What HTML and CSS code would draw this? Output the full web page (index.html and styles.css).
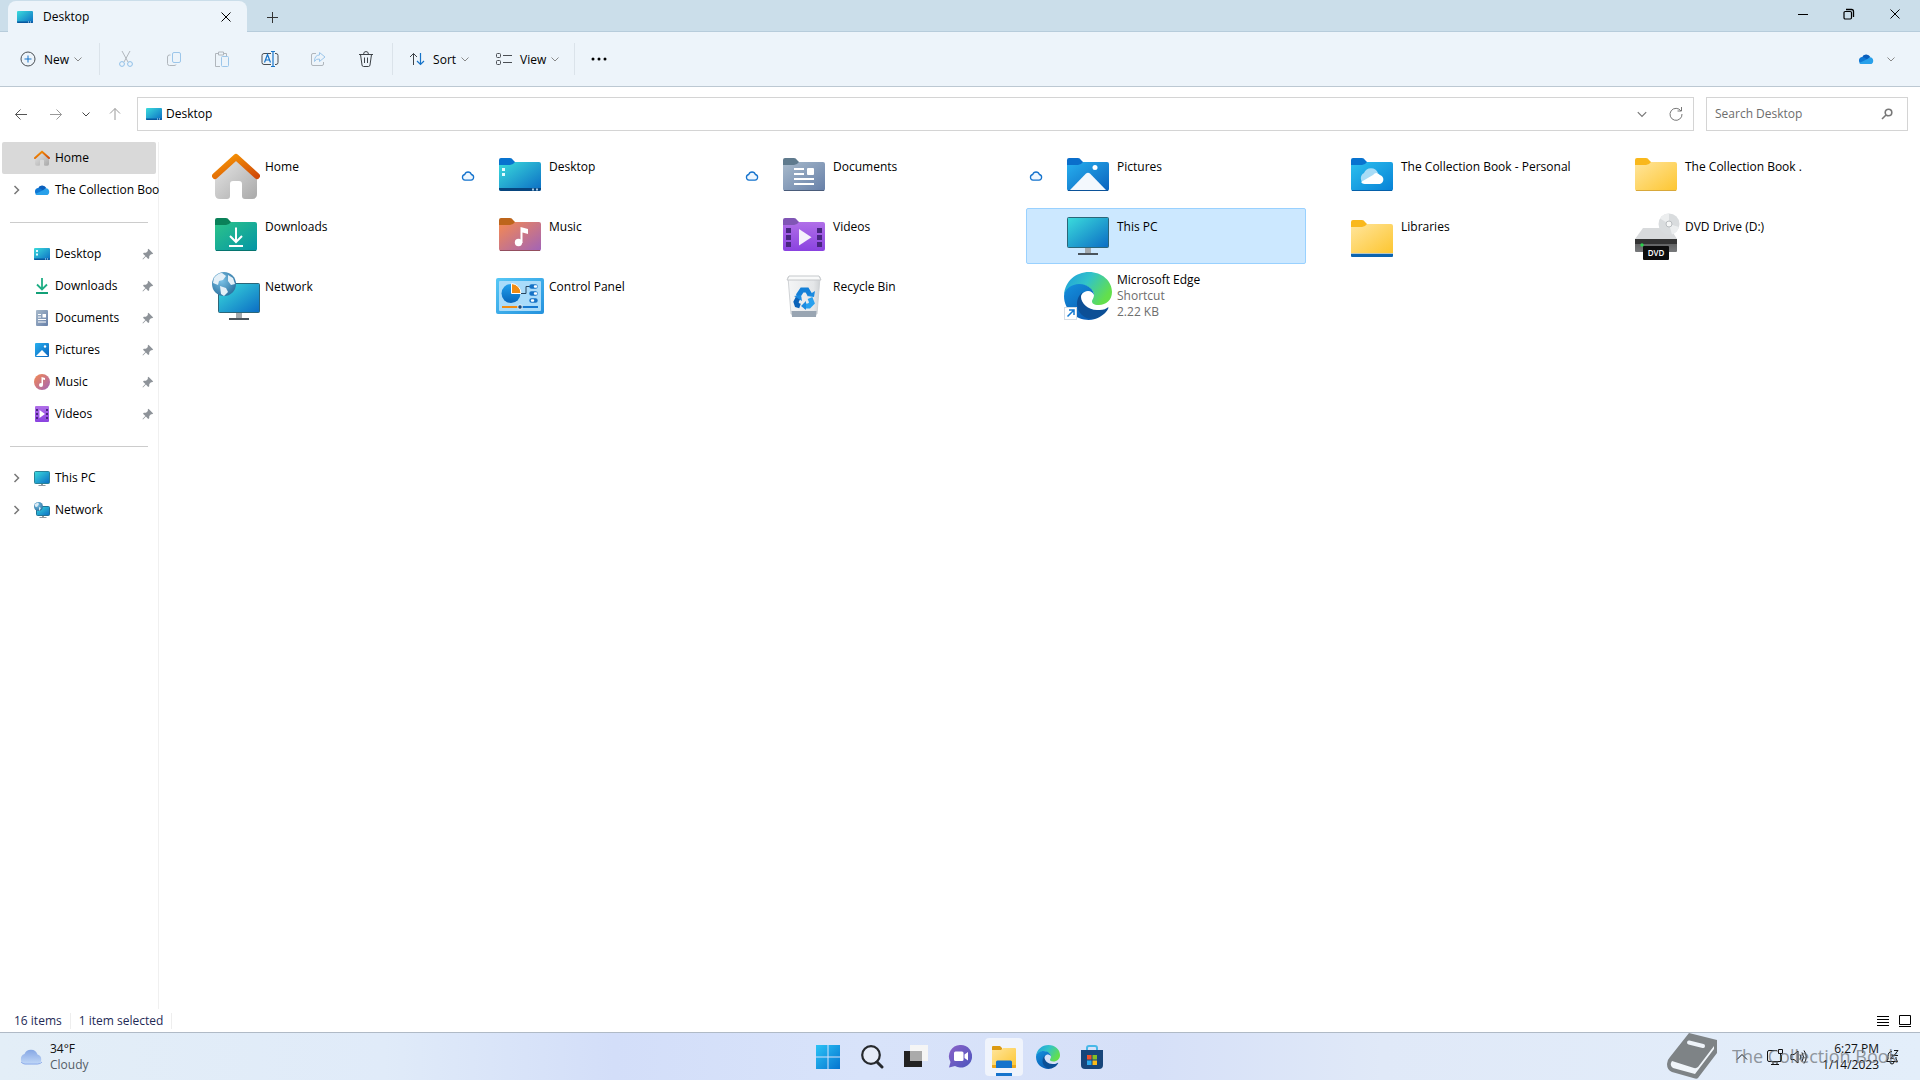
FILE: index.html
```html
<!DOCTYPE html>
<html lang="en">
<head>
<meta charset="utf-8">
<title>Desktop</title>
<link rel="stylesheet" href="styles.css">
</head>
<body>
<svg class="defs" aria-hidden="true">
  <defs>
    <linearGradient id="gTeal" x1="0" y1="0" x2="1" y2="1"><stop offset="0" stop-color="#3bdcdc"/><stop offset="1" stop-color="#0b6cc4"/></linearGradient>
    <linearGradient id="gBlue" x1="0" y1="0" x2="1" y2="1"><stop offset="0" stop-color="#27b0ef"/><stop offset="1" stop-color="#0b62bd"/></linearGradient>
    <linearGradient id="gCloudF" x1="0" y1="0" x2="1" y2="1"><stop offset="0" stop-color="#2cc0ee"/><stop offset="1" stop-color="#0781d6"/></linearGradient>
    <linearGradient id="gGreen" x1="0" y1="0" x2="1" y2="1"><stop offset="0" stop-color="#2dc489"/><stop offset="1" stop-color="#0394a6"/></linearGradient>
    <linearGradient id="gMusic" x1="0" y1="0" x2="1" y2="1"><stop offset="0" stop-color="#f58a51"/><stop offset="1" stop-color="#a163b8"/></linearGradient>
    <linearGradient id="gDoc" x1="0" y1="0" x2="1" y2="1"><stop offset="0" stop-color="#a8bacb"/><stop offset="1" stop-color="#667fa8"/></linearGradient>
    <linearGradient id="gVid" x1="0" y1="0" x2="0" y2="1"><stop offset="0" stop-color="#b06fe8"/><stop offset="1" stop-color="#8a42e0"/></linearGradient>
    <linearGradient id="gYel" x1="0" y1="0" x2="1" y2="1"><stop offset="0" stop-color="#ffe59c"/><stop offset="1" stop-color="#fdc630"/></linearGradient>
    <linearGradient id="gRoof" x1="0" y1="0" x2="1" y2="1"><stop offset="0" stop-color="#fa9c05"/><stop offset="1" stop-color="#d04a08"/></linearGradient>
    <linearGradient id="gWall" x1="0" y1="0" x2="1" y2="1"><stop offset="0" stop-color="#e6e6e6"/><stop offset="1" stop-color="#a9a9a9"/></linearGradient>
    <linearGradient id="gPanel" x1="0" y1="0" x2="1" y2="1"><stop offset="0" stop-color="#56c8f6"/><stop offset="1" stop-color="#2491dd"/></linearGradient>
    <linearGradient id="gPie" x1="0" y1="0" x2="0" y2="1"><stop offset="0" stop-color="#22a0ec"/><stop offset="1" stop-color="#0666bb"/></linearGradient>
    <radialGradient id="gGlobe" cx=".4" cy=".35" r=".7"><stop offset="0" stop-color="#7cc3e8"/><stop offset="1" stop-color="#2a6f9d"/></radialGradient>
    <linearGradient id="gEdgeTop" x1="0" y1="0" x2="1" y2=".5"><stop offset="0" stop-color="#1c9ce0"/><stop offset=".5" stop-color="#32c3c8"/><stop offset="1" stop-color="#63df4c"/></linearGradient>
    <linearGradient id="gEdgeMid" x1="0" y1="0" x2=".6" y2="1"><stop offset="0" stop-color="#1591dd"/><stop offset="1" stop-color="#0a5db5"/></linearGradient>
    <linearGradient id="gChat" x1="0" y1="0" x2="1" y2="1"><stop offset="0" stop-color="#8b62c8"/><stop offset="1" stop-color="#4b55bd"/></linearGradient>
    <linearGradient id="gWin" gradientUnits="userSpaceOnUse" x1="0" y1="0" x2="24" y2="24"><stop offset="0" stop-color="#2cc3f6"/><stop offset="1" stop-color="#0574cf"/></linearGradient>
    <linearGradient id="gDrive" x1="0" y1="0" x2="0" y2="1"><stop offset="0" stop-color="#555"/><stop offset="1" stop-color="#77797b"/></linearGradient>
    <linearGradient id="gBin" x1="0" y1="0" x2="1" y2="0"><stop offset="0" stop-color="#f4f5f6"/><stop offset=".8" stop-color="#e4e6e8"/><stop offset="1" stop-color="#cfd2d5"/></linearGradient>
    <linearGradient id="gWeather" x1="0" y1="0" x2="0" y2="1"><stop offset="0" stop-color="#86a7e4"/><stop offset="1" stop-color="#c2d9f8"/></linearGradient>

    <symbol id="chev" viewBox="0 0 10 10"><path d="M1.500 3.500 5 7l3.500-3.500" fill="none" stroke="currentColor"/></symbol>
    <symbol id="chevRight" viewBox="0 0 10 10"><path d="M3.500 1 7.500 5l-4 4" fill="none" stroke="currentColor" stroke-width="1.500"/></symbol>
    <symbol id="cross" viewBox="0 0 12 12"><path d="m1.500 1.500 9 9m0-9-9 9" fill="none" stroke="currentColor"/></symbol>
    <symbol id="pin" viewBox="0 0 12 12"><path d="M6.500.8 11.200 5.500 10 6.300 9 6.200 7.300 8.100 7.200 10.300 6.200 11 3.900 8.600 1 11.500.5 11 3.400 8.100 1 5.700 1.800 4.700 4 4.700 5.900 3 5.700 1.800Z" fill="#8e9399"/></symbol>
    <symbol id="onedrive" viewBox="0 0 16 12"><path d="M4 4.500A4.500 4.500 0 0 1 12.300 4L9 8 3 7Z" fill="#0a5fbd"/><path d="M3.800 4.100C5 4 6 4.300 7 5l7 5.500-10 .5A3.500 3.500 0 0 1 3.800 4.100Z" fill="#0f78d4"/><path d="M9 6.300 12 4.200a3.500 3.500 0 0 1 .5 6.900H3.800c-1 0-1.900-.5-2.600-1.200Z" fill="#28a0ea"/></symbol>
    <symbol id="cloud" viewBox="0 0 14 12"><path d="M4 10.200a2.900 2.900 0 0 1-.3-5.700 3.500 3.500 0 0 1 6.700 0 2.900 2.900 0 0 1-.4 5.700Z" fill="#eef7ff" stroke="#1573cd" stroke-width="1.300"/></symbol>

    <symbol id="desk" viewBox="0 0 16 12"><rect width="16" height="12" rx="1" fill="url(#gTeal)"/><path d="M0 10.500h16v.5a1 1 0 0 1-1 1H1a1 1 0 0 1-1-1Z" fill="#07579e"/><path d="M11 11h1m1 0h1" stroke="#cfe9fa"/></symbol>
    <symbol id="deskDots" viewBox="0 0 16 12"><use href="#desk"/><path d="M2 2h2v2H2zm0 3.500h2v2H2z" fill="#e3fbff"/></symbol>

    <symbol id="home" viewBox="0 0 48 48"><path d="M24 8 45 27v15q0 5-5 5h-7q-3 0-3-3V32q0-3-3-3h-6q-3 0-3 3v12q0 3-3 3H8q-5 0-5-5V27Z" fill="url(#gWall)"/><path d="M3 24 24 5l21 19" fill="none" stroke="url(#gRoof)" stroke-width="6" stroke-linecap="round" stroke-linejoin="round"/></symbol>

    <symbol id="fDesktop" viewBox="0 0 48 48"><path d="M3 8q0-2 2-2h9q2 0 3 2l2 2v6H3Z" fill="#0873cf"/><path d="M3 13h11q3 0 5-3h24q2 0 2 2v25q0 2-2 2H5q-2 0-2-2Z" fill="url(#gTeal)"/><path d="M3 36h42v1q0 2-2 2H5q-2 0-2-2Z" fill="#07457e"/><path d="M6 16h3v3H6zm0 5h3v3H6z" fill="#e3fbff"/><path d="M36 37.500h2m2 0h2" stroke="#a7cce8" stroke-width="2"/></symbol>
    <symbol id="fDocs" viewBox="0 0 48 48"><path d="M3 8q0-2 2-2h9q2 0 3 2l2 2v6H3Z" fill="#5f7a8d"/><path d="M3 13h11q3 0 5-3h24q2 0 2 2v25q0 2-2 2H5q-2 0-2-2Z" fill="url(#gDoc)"/><path d="M4 38.500h40" stroke="#4a5c7a"/><path d="M14 17h10m-10 5h10m-10 5h20m-20 5h20" stroke="#fff" stroke-width="2"/><rect x="27" y="16" width="7" height="7" rx="1" fill="#fff"/></symbol>
    <symbol id="fPics" viewBox="0 0 48 48"><path d="M3 8q0-2 2-2h9q2 0 3 2l2 2v6H3Z" fill="#0a6ecb"/><path d="M3 13h11q3 0 5-3h24q2 0 2 2v25q0 2-2 2H5q-2 0-2-2Z" fill="url(#gBlue)"/><path d="M6 38 22 21.500q2-1.500 4 0L42 38Z" fill="#f3f8fd"/><circle cx="31" cy="15.500" r="2.500" fill="#fff"/><path d="M4 38.500h40" stroke="#0b5299"/></symbol>
    <symbol id="fCloud" viewBox="0 0 48 48"><path d="M3 8q0-2 2-2h9q2 0 3 2l2 2v6H3Z" fill="#0873cf"/><path d="M3 13h11q3 0 5-3h24q2 0 2 2v25q0 2-2 2H5q-2 0-2-2Z" fill="url(#gCloudF)"/><path d="M4 38.500h40" stroke="#0460aa"/><path d="M17 32a6 6 0 0 1-1-11 7.500 7.500 0 0 1 14 0Z" fill="#a8dcf6"/><path d="M17 32q-3 0-4-2l12-7q3-4 7 0a4.700 4.700 0 0 1 0 9Z" fill="#fff"/></symbol>
    <symbol id="fYellow" viewBox="0 0 48 48"><path d="M3 8q0-2 2-2h9q2 0 3 2l2 2v6H3Z" fill="#f9b81c"/><path d="M3 13h11q3 0 5-3h24q2 0 2 2v25q0 2-2 2H5q-2 0-2-2Z" fill="url(#gYel)"/><path d="M4 38.500h40" stroke="#d8a83a"/></symbol>
    <symbol id="fLib" viewBox="0 0 48 48"><path d="M3 10q0-2 2-2h9q2 0 3 2l2 2v6H3Z" fill="#f9b81c"/><path d="M3 15h11q3 0 5-3h24q2 0 2 2v27H3Z" fill="url(#gYel)"/><path d="M3 41h42v1H3z" fill="#b9c8c0"/><path d="M3 42h42v2q0 1-1 1H4q-1 0-1-1Z" fill="#0c64b0"/></symbol>
    <symbol id="fDown" viewBox="0 0 48 48"><path d="M3 8q0-2 2-2h9q2 0 3 2l2 2v6H3Z" fill="#0a8159"/><path d="M3 13h11q3 0 5-3h24q2 0 2 2v25q0 2-2 2H5q-2 0-2-2Z" fill="url(#gGreen)"/><path d="M4 38.500h40" stroke="#06756f"/><path d="M24 15.500V29m-6-5 6 6 6-6M17 34h14" fill="none" stroke="#fff" stroke-width="2"/></symbol>
    <symbol id="fMusic" viewBox="0 0 48 48"><path d="M3 8q0-2 2-2h9q2 0 3 2l2 2v6H3Z" fill="#bd651b"/><path d="M3 13h11q3 0 5-3h24q2 0 2 2v25q0 2-2 2H5q-2 0-2-2Z" fill="url(#gMusic)"/><path d="M4 38.500h40" stroke="#934e5e"/><circle cx="22.500" cy="30.500" r="3.700" fill="#fff"/><path d="M24.500 31V15l7.500 2v5l-5.500-1.500V31Z" fill="#fff"/></symbol>
    <symbol id="fVid" viewBox="0 0 48 48"><path d="M3 8q0-2 2-2h9q2 0 3 2l2 2v6H3Z" fill="#8055b5"/><path d="M3 13h11q3 0 5-3h24q2 0 2 2v25q0 2-2 2H5q-2 0-2-2Z" fill="url(#gVid)"/><path d="M6 16h5v5H6zm0 7h5v5H6zm0 7h5v5H6zM37 16h5v5h-5zm0 7h5v5h-5zm0 7h5v5h-5z" fill="#482680"/><path d="M19 17v16.500l12.500-8.300Z" fill="#f6f0fc"/></symbol>

    <symbol id="pc" viewBox="0 0 48 48"><path d="M21 35h6v7h-6z" fill="#a4aaae"/><path d="M14 41h20v2H14z" fill="#4a545c"/><rect x="3.500" y="5.500" width="41" height="30" rx="1" fill="url(#gTeal)" stroke="#2b6679"/></symbol>
    <symbol id="net" viewBox="0 0 48 48"><path d="M24 40h6v7h-6z" fill="#a4aaae"/><path d="M17 46h20v2H17z" fill="#4a545c"/><rect x="6.500" y="11.500" width="41" height="29" rx="1" fill="url(#gTeal)" stroke="#2b6679"/><circle cx="12" cy="12" r="12" fill="url(#gGlobe)"/><path d="M2 6q4-5 8-5l4 3-3 4-4 1-1 4-5-2ZM16 3l5 3 2 6-4 1-3-4ZM8 14l6 2 2 4-4 4-3-2Z" fill="#e4f0f8"/></symbol>
    <symbol id="cpl" viewBox="0 0 48 48"><rect y="6" width="48" height="36" rx="2" fill="url(#gPanel)"/><rect x="3" y="9" width="42" height="30" rx="1" fill="#a9dcfa"/><circle cx="15" cy="21.500" r="9.500" fill="url(#gPie)"/><path d="M15.500 21.500v-10a10 10 0 0 1 9.500 10Z" fill="#f18c12" stroke="#fff"/><path d="M25 21.500h5v-7h4" fill="none" stroke="#27455e"/><path d="M35.500 14.500h4m-4 7h4m-4 7h4" stroke="#1573c6" stroke-width="4.500" stroke-linecap="round"/><path d="M39 14.500h1m-1 7h1m-4 7h1" stroke="#fff" stroke-width="2.500" stroke-linecap="round"/><path d="M6 35h16" stroke="#f18c12" stroke-width="2"/><path d="M26 35h16" stroke="#1478d0" stroke-width="2"/><circle cx="24" cy="35" r="2.300" fill="#1d4d7c" stroke="#e8f6ff"/></symbol>
    <symbol id="bin" viewBox="0 0 48 48"><path d="m8 5 3 37h26l3-37Z" fill="url(#gBin)" stroke="#d0d3d6"/><path d="M9 4h30l2 4H7Z" fill="#f9fafa" stroke="#c5c8cb"/><path d="M11.500 39h25l-.5 6H12Z" fill="#99a5b2"/><g fill="none" stroke-width="5"><path d="m18 24 4-6h5l3 5" stroke="#1480d8"/><path d="m30 26 2 5-3 3h-5" stroke="#27a0ee"/><path d="m20 34-3-1-1-3 3-6" stroke="#0b62b8"/></g><path d="m27 24 7 1 1-6ZM26 29v9l-5-4ZM14 24l7-1 1 6Z" fill="#1c8be0"/></symbol>
    <symbol id="edge" viewBox="0 0 48 48"><path d="M0 23C1 9 12 0 25 0c13 0 23 9 23 20 0 8-6 13-13 13-6 0-7-2-7-4 0-1 2-3 2-6 0-5-6-10-14-10C8 13 2 17 0 23Z" fill="url(#gEdgeTop)"/><path d="M0 24C0 17 8 12 15 12c9 0 15 6 15 11-1-2-3-4-6-4-5 0-9 5-9 11 0 9 7 16 16 17C17 51 0 41 0 24Z" fill="url(#gEdgeMid)"/><path d="M19 20c-3 2-6 6-6 12 0 9 8 16 18 15 6-2 11-6 13-10 1-2 0-2-1-1-3 2-6 2-10 2-9 0-16-7-16-13 0-2 1-4 2-5Z" fill="#0c4f96"/></symbol>
    <symbol id="dvd" viewBox="0 0 48 48"><path d="M11 16h27l7 11H3Z" fill="#d8dadc"/><path d="M3 27h42v12q0 1-1 1H4q-1 0-1-1Z" fill="url(#gDrive)"/><path d="M3 27h42v5H3z" fill="#333"/><circle cx="37" cy="12" r="10.500" fill="#d9dcde"/><path d="m37 12-9-5.500A10.500 10.500 0 0 1 37 1.500ZM37 12l10 3q-2 6-7 7.500Z" fill="#eceeef"/><circle cx="37" cy="12" r="3" fill="#f6f7f7" stroke="#b9bdc0"/><circle cx="10" cy="33" r="1.700" fill="#29d34b"/><rect x="11" y="34" width="26" height="14" rx="1" fill="#0d0d0d"/><text x="24" y="44" text-anchor="middle" class="dvd-text">DVD</text></symbol>

    <symbol id="sDown" viewBox="0 0 16 16"><path d="M8 0v11M3 6.500l5 5 5-5" fill="none" stroke="#1fae85" stroke-width="1.800"/><path d="M2 15h12" stroke="#12a077" stroke-width="2"/></symbol>
    <symbol id="sDocs" viewBox="0 0 16 16"><rect x="2" width="12" height="16" rx="1" fill="url(#gDoc)"/><path d="M4 4.500h3M4 7h3m-3 2.500h8M4 12h8" stroke="#fff"/><path d="M8.500 4H12v3.500H8.500z" fill="#fff"/></symbol>
    <symbol id="sPics" viewBox="0 0 16 16"><rect x="1" y="1" width="14" height="14" rx="1" fill="url(#gBlue)"/><path d="m2 14 6-6 6 6Z" fill="#fff"/><circle cx="11" cy="4.500" r="1.200" fill="#fff"/></symbol>
    <symbol id="sMusic" viewBox="0 0 16 16"><circle cx="8" cy="8" r="8" fill="url(#gMusic)"/><circle cx="7" cy="11" r="2" fill="#fff"/><path d="M7.500 11V3l3.500 1v2L9 5.500V11Z" fill="#fff"/></symbol>
    <symbol id="sVid" viewBox="0 0 16 16"><rect x="1" width="14" height="16" rx="1" fill="url(#gVid)"/><path d="M2 3h2v2H2zm0 4h2v2H2zm0 4h2v2H2zM12 3h2v2h-2zm0 4h2v2h-2zm0 4h2v2h-2z" fill="#482680"/><path d="M5.500 4v8L11 8Z" fill="#fff"/></symbol>
    <symbol id="sPc" viewBox="0 0 16 16"><path d="M7 13h2v2H7zM4.500 15h7v1h-7z" fill="#8f989e"/><rect x=".5" y="1.500" width="15" height="12" rx="1" fill="url(#gTeal)" stroke="#2a8297"/></symbol>
    <symbol id="sNet" viewBox="0 0 16 16"><path d="M8 13h2v2H8zM5.500 15h7v1h-7z" fill="#8f989e"/><rect x="2.500" y="4.500" width="13" height="9" rx="1" fill="url(#gTeal)" stroke="#1f7396"/><circle cx="4.500" cy="4.500" r="4.500" fill="url(#gGlobe)"/><path d="m1 2 3-1.500L5 2 3 5 1 4.500ZM5 5l2 1-2 3Z" fill="#dcebf4"/></symbol>
  </defs>
</svg>

<div class="window">
  <header class="titlebar">
    <div class="tab">
      <svg class="i16x12"><use href="#desk"/></svg>
      <span class="tab-name">Desktop</span>
      <button class="bare" aria-label="Close tab"><svg width="12" height="12"><use href="#cross"/></svg></button>
    </div>
    <button class="bare new-tab" aria-label="New tab"><svg width="12" height="12" viewBox="0 0 12 12"><path d="M6.500 1v11M1 6.500h11" stroke="#333"/></svg></button>
    <div class="captions">
      <button class="bare" aria-label="Minimize"><svg width="12" height="12" viewBox="0 0 12 12"><path d="M1 6.500h10" stroke="#000"/></svg></button>
      <button class="bare" aria-label="Restore"><svg width="12" height="12" viewBox="0 0 12 12"><path d="M3 1.500h5.500q2 0 2 2V9" fill="none" stroke="#000" stroke-width="1.300"/><rect x="1" y="3.500" width="7.500" height="7.500" rx="1.200" fill="none" stroke="#000" stroke-width="1.200"/></svg></button>
      <button class="bare" aria-label="Close"><svg width="12" height="12"><use href="#cross"/></svg></button>
    </div>
  </header>

  <div class="toolbar">
    <button class="tool new"><svg width="16" height="16" viewBox="0 0 16 16" fill="none"><circle cx="8" cy="8" r="7" stroke="#4a4f54"/><path d="M8 4.500v7M4.500 8h7" stroke="#1673c8"/></svg><span>New</span><svg class="chev"><use href="#chev"/></svg></button>
    <span class="vsep"></span>
    <div class="tools">
      <button class="tool off" aria-label="Cut" disabled><svg width="16" height="16" viewBox="0 0 16 16" fill="none"><path d="M4 0 10 11M12 0 6 11" stroke="#b0b6bc"/><circle cx="4" cy="13" r="2.400" stroke="#8fbfe8"/><circle cx="12" cy="13" r="2.400" stroke="#8fbfe8"/></svg></button>
      <button class="tool off" aria-label="Copy" disabled><svg width="16" height="16" viewBox="0 0 16 16" fill="none"><rect x="6.500" y="1.500" width="8" height="10" rx="1.500" stroke="#9cc6ea"/><path d="M4.500 4h-1q-2 0-2 2v6.500q0 2 2 2H8q2 0 2-1" stroke="#b0b6bc"/></svg></button>
      <button class="tool off" aria-label="Paste" disabled><svg width="16" height="16" viewBox="0 0 16 16" fill="none"><path d="M4 2.500H1.500v13H6M10 2.500h2.500V5M4.500 1h5v3h-5z" stroke="#b0b6bc"/><rect x="7.500" y="5.500" width="7" height="10" rx="1" stroke="#9cc6ea"/></svg></button>
      <button class="tool" aria-label="Rename"><svg width="18" height="16" viewBox="0 0 18 16" fill="none"><path d="M10 2.500H3q-2 0-2 2v7q0 2 2 2h7M14 2.500h1q2 0 2 2v7q0 2-2 2h-1" stroke="#4a4f54"/><path d="M12 .5v15M10 .5h4m-4 15h4M3.500 11.500l3-8 3 8m-5-2.500h4" stroke="#1673c8" stroke-width="1.200"/></svg></button>
      <button class="tool off" aria-label="Share" disabled><svg width="16" height="16" viewBox="0 0 16 16" fill="none"><path d="M6 2.500H3q-1.500 0-1.500 1.500v9q0 1.500 1.500 1.500h9q1.500 0 1.500-1.500v-2" stroke="#b0b6bc"/><path d="M9.500 1.500 15 6l-5.500 4.500V8q-3.500-.5-5 2.500Q4.500 4 9.500 4Z" stroke="#9cc6ea"/></svg></button>
      <button class="tool" aria-label="Delete"><svg width="16" height="16" viewBox="0 0 16 16" fill="none"><path d="M1 3.500h14M5.500 3.500q0-3 2.500-3t2.500 3M2.500 3.500 4 14q.2 1.500 1.500 1.500h5q1.300 0 1.500-1.500l1.500-10.500M6.500 6.500v5.500m3-5.500v5.500" stroke="#3d4247"/></svg></button>
    </div>
    <span class="vsep"></span>
    <button class="tool sort"><svg width="16" height="14" viewBox="0 0 16 14" fill="none"><path d="M4.500 13V1.500M1 5l3.500-3.500L8 5" stroke="#3d4247"/><path d="M11.500 1v11.500M8 9l3.500 3.500L15 9" stroke="#1673c8" stroke-width="1.200"/></svg><span>Sort</span><svg class="chev"><use href="#chev"/></svg></button>
    <button class="tool view"><svg width="16" height="14" viewBox="0 0 16 14" fill="none" stroke="#4a4f54"><rect x=".5" y="1.500" width="4" height="4" rx="1"/><rect x=".5" y="8.500" width="4" height="4" rx="1"/><path d="M7 3.500h9M7 10.500h9"/></svg><span>View</span><svg class="chev"><use href="#chev"/></svg></button>
    <span class="vsep"></span>
    <button class="tool more" aria-label="See more"><svg width="18" height="4" viewBox="0 0 18 4"><circle cx="3" cy="2" r="1.500"/><circle cx="9" cy="2" r="1.500"/><circle cx="15" cy="2" r="1.500"/></svg></button>
    <button class="tool account" aria-label="OneDrive"><svg class="i16x12"><use href="#onedrive"/></svg><svg class="chev"><use href="#chev"/></svg></button>
  </div>

  <div class="navbar">
    <nav class="history" aria-label="History">
      <button class="bare" aria-label="Back"><svg width="14" height="12" viewBox="0 0 14 12" fill="none" stroke="#555"><path d="M13 6.500H1.500M6.500 1.500l-5 5 5 5"/></svg></button>
      <button class="bare forward" aria-label="Forward"><svg width="14" height="12" viewBox="0 0 14 12" fill="none" stroke="#999"><path d="M1 6.500h11.500M7.500 1.500l5 5-5 5"/></svg></button>
      <button class="bare recent" aria-label="Recent"><svg width="10" height="10"><use href="#chev"/></svg></button>
      <button class="bare" aria-label="Up"><svg width="12" height="14" viewBox="0 0 12 14" fill="none" stroke="#999"><path d="M6 13V1.500M1 6.500l5-5 5 5"/></svg></button>
    </nav>
    <div class="address">
      <a class="crumb" href="#"><svg class="i16x12"><use href="#desk"/></svg>Desktop</a>
      <button class="bare" aria-label="Previous locations"><svg width="12" height="12"><use href="#chev"/></svg></button>
      <button class="bare" aria-label="Refresh"><svg width="14" height="14" viewBox="0 0 14 14" fill="none" stroke="#777"><path d="M12 4a6 6 0 1 0 1 3M12.500 0v4h-4"/></svg></button>
    </div>
    <div class="search">
      <input type="search" placeholder="Search Desktop" aria-label="Search Desktop">
      <svg width="12" height="12" viewBox="0 0 12 12" fill="none" stroke="#777" stroke-width="1.600"><circle cx="7.500" cy="4.500" r="3.300"/><path d="M5 7 1 11"/></svg>
    </div>
  </div>

  <div class="body">
    <nav class="sidebar" aria-label="Folders">
      <a class="row current" href="#"><span class="exp"></span><svg class="i16"><use href="#home"/></svg><span class="label">Home</span></a>
      <a class="row" href="#"><span class="exp"><svg width="10" height="10"><use href="#chevRight"/></svg></span><svg class="i16"><use href="#onedrive"/></svg><span class="label">The Collection Boo</span></a>
      <hr>
      <a class="row" href="#"><span class="exp"></span><svg class="i16"><use href="#deskDots"/></svg><span class="label">Desktop</span><svg class="pin"><use href="#pin"/></svg></a>
      <a class="row" href="#"><span class="exp"></span><svg class="i16"><use href="#sDown"/></svg><span class="label">Downloads</span><svg class="pin"><use href="#pin"/></svg></a>
      <a class="row" href="#"><span class="exp"></span><svg class="i16"><use href="#sDocs"/></svg><span class="label">Documents</span><svg class="pin"><use href="#pin"/></svg></a>
      <a class="row" href="#"><span class="exp"></span><svg class="i16"><use href="#sPics"/></svg><span class="label">Pictures</span><svg class="pin"><use href="#pin"/></svg></a>
      <a class="row" href="#"><span class="exp"></span><svg class="i16"><use href="#sMusic"/></svg><span class="label">Music</span><svg class="pin"><use href="#pin"/></svg></a>
      <a class="row" href="#"><span class="exp"></span><svg class="i16"><use href="#sVid"/></svg><span class="label">Videos</span><svg class="pin"><use href="#pin"/></svg></a>
      <hr>
      <a class="row" href="#"><span class="exp"><svg width="10" height="10"><use href="#chevRight"/></svg></span><svg class="i16"><use href="#sPc"/></svg><span class="label">This PC</span></a>
      <a class="row" href="#"><span class="exp"><svg width="10" height="10"><use href="#chevRight"/></svg></span><svg class="i16"><use href="#sNet"/></svg><span class="label">Network</span></a>
    </nav>

    <main class="files">
      <a class="file" href="#"><span class="state"></span><svg class="i48"><use href="#home"/></svg><span class="meta">Home</span></a>
      <a class="file" href="#"><span class="state"><svg width="14" height="12"><use href="#cloud"/></svg></span><svg class="i48"><use href="#fDesktop"/></svg><span class="meta">Desktop</span></a>
      <a class="file" href="#"><span class="state"><svg width="14" height="12"><use href="#cloud"/></svg></span><svg class="i48"><use href="#fDocs"/></svg><span class="meta">Documents</span></a>
      <a class="file" href="#"><span class="state"><svg width="14" height="12"><use href="#cloud"/></svg></span><svg class="i48"><use href="#fPics"/></svg><span class="meta">Pictures</span></a>
      <a class="file" href="#"><span class="state"></span><svg class="i48"><use href="#fCloud"/></svg><span class="meta">The Collection Book - Personal</span></a>
      <a class="file" href="#"><span class="state"></span><svg class="i48"><use href="#fYellow"/></svg><span class="meta">The Collection Book .</span></a>
      <a class="file" href="#"><span class="state"></span><svg class="i48"><use href="#fDown"/></svg><span class="meta">Downloads</span></a>
      <a class="file" href="#"><span class="state"></span><svg class="i48"><use href="#fMusic"/></svg><span class="meta">Music</span></a>
      <a class="file" href="#"><span class="state"></span><svg class="i48"><use href="#fVid"/></svg><span class="meta">Videos</span></a>
      <a class="file selected" href="#"><span class="state"></span><svg class="i48"><use href="#pc"/></svg><span class="meta">This PC</span></a>
      <a class="file" href="#"><span class="state"></span><svg class="i48"><use href="#fLib"/></svg><span class="meta">Libraries</span></a>
      <a class="file" href="#"><span class="state"></span><svg class="i48"><use href="#dvd"/></svg><span class="meta">DVD Drive (D:)</span></a>
      <a class="file" href="#"><span class="state"></span><svg class="i48"><use href="#net"/></svg><span class="meta">Network</span></a>
      <a class="file" href="#"><span class="state"></span><svg class="i48"><use href="#cpl"/></svg><span class="meta">Control Panel</span></a>
      <a class="file" href="#"><span class="state"></span><svg class="i48"><use href="#bin"/></svg><span class="meta">Recycle Bin</span></a>
      <a class="file" href="#"><span class="state"></span><svg class="i48" viewBox="0 0 48 48"><use href="#edge"/><rect x=".5" y="35.500" width="12" height="12" fill="#fff" stroke="#d5dde5"/><path d="m3.500 44.500 6-6M5 38h5v5" fill="none" stroke="#1379d2" stroke-width="1.500"/></svg><span class="meta">Microsoft Edge<small>Shortcut</small><small>2.22 KB</small></span></a>
    </main>
  </div>

  <footer class="status">
    <span class="count">16 items</span>
    <span class="count">1 item selected</span>
    <div class="modes">
      <button class="bare" aria-label="Details"><svg width="12" height="12" viewBox="0 0 12 12"><path d="M0 1.500h12M0 4.500h12M0 7.500h12M0 10.500h12" stroke="#000"/></svg></button>
      <button class="bare" aria-label="Tiles"><svg width="12" height="12" viewBox="0 0 12 12" fill="none" stroke="#000"><path d="M.5.500h11v9H.5zM0 11.500h12"/></svg></button>
    </div>
  </footer>
</div>

<div class="taskbar">
  <button class="weather">
    <svg width="24" height="16" viewBox="0 0 24 16"><path d="M6 15.500A5.500 5.500 0 0 1 5.500 5a7 7 0 0 1 13 .5 5.200 5.200 0 0 1 0 10Z" fill="url(#gWeather)"/><path d="M2 13q2 2 4 2h12.500q3 0 4.500-2" fill="none" stroke="#8fadea"/></svg>
    <span class="weather-text"><span class="temp">34°F</span><span>Cloudy</span></span>
  </button>
  <div class="apps">
    <button class="app" aria-label="Start"><svg viewBox="0 0 24 24"><path d="M0 0h11.500v11.500H0zM12.500 0H24v11.500H12.500zM0 12.500h11.500V24H0zM12.500 12.500H24V24H12.500z" fill="url(#gWin)"/></svg></button>
    <button class="app" aria-label="Search"><svg viewBox="0 0 24 24" fill="none" stroke="#26292d"><circle cx="11" cy="10" r="8.800" stroke-width="2.200" fill="#e6ecf8"/><path d="m17 17 5 5" stroke-width="3" stroke-linecap="round"/></svg></button>
    <button class="app" aria-label="Task view"><svg viewBox="0 0 24 24"><path d="M0 6h18v16H0z" fill="#222"/><path d="M6 0h18v16H6z" fill="#f5f5f5"/><path d="M6 6h12v10H6z" fill="#aaa"/></svg></button>
    <button class="app" aria-label="Chat"><svg viewBox="0 0 24 24"><path d="M12.500 0a11.300 11.300 0 1 1-5.500 21L1 22.500l1.500-5.500A11.300 11.300 0 0 1 12.500 0Z" fill="url(#gChat)"/><rect x="6" y="6.500" width="9.500" height="9.500" rx="1.500" fill="#fff"/><path d="m16.500 9.500 3.500-2.500v8.500l-3.500-2.500Z" fill="#fff"/></svg></button>
    <button class="app open" aria-label="File Explorer"><svg viewBox="0 0 24 24"><path d="M0 2q0-1 1-1h7l2 2v4H0Z" fill="#dc9a12"/><path d="M0 5h9l2-2h12q1 0 1 1v18q0 1-1 1H1q-1 0-1-1Z" fill="url(#gYel)"/><path d="M0 20h24v2q0 1-1 1H1q-1 0-1-1Z" fill="#eda91d"/><path d="M4 23v-6q0-1.500 1.500-1.500h13q1.500 0 1.500 1.500v6Z" fill="#1573cc"/></svg></button>
    <button class="app" aria-label="Microsoft Edge"><svg viewBox="0 0 24 24"><use href="#edge"/></svg></button>
    <button class="app" aria-label="Microsoft Store"><svg viewBox="0 0 24 24"><path d="M7 6V3q0-2 2-2h6q2 0 2 2v3" fill="none" stroke="#48b8e8" stroke-width="2"/><path d="M1 5h22v15q0 4-4 4H5q-4 0-4-4Z" fill="#17457a"/><path d="M7 10h4.500v4.500H7z" fill="#f0512b"/><path d="M12.500 10H17v4.500h-4.500z" fill="#85bf24"/><path d="M7 15.500h4.500V20H7z" fill="#2aa8ec"/><path d="M12.500 15.500H17V20h-4.500z" fill="#fcbb17"/></svg></button>
  </div>
  <div class="tray">
    <button class="bare overflow" aria-label="Hidden icons"><svg width="14" height="14" viewBox="0 0 14 14" fill="none" stroke="#111"><path d="M2 9.500 7 4.500l5 5"/></svg></button>
    <button class="bare" aria-label="Network"><svg width="18" height="18" viewBox="0 0 18 18" fill="none" stroke="#111"><path d="M11 2.500H3q-1.500 0-1.500 1.500v8q0 1.500 1.500 1.500h11q1.500 0 1.500-1.500V7M5 16.500h8M7 13.500v3m4-3v3M12.500 1.500h4v4h-4zM14.500 5.500v8"/></svg></button>
    <button class="bare" aria-label="Volume"><svg width="18" height="16" viewBox="0 0 18 16" fill="none" stroke="#111"><path d="M1 5.500h3l4-3.500v12l-4-3.500H1ZM10 5.500q1.500 2.500 0 5M12 3.500q3 4.500 0 9M14 1.500q4.500 6.500 0 13"/></svg></button>
    <button class="clock"><span>6:27 PM</span><span>1/14/2023</span></button>
    <button class="bare" aria-label="Notifications"><svg width="14" height="16" viewBox="0 0 14 16" fill="none" stroke="#111"><path d="M7 2.500q-4 0-4 5V10l-1.500 2.500h11L11 10V8M5 12.500q0 2.500 2 2.500t2-2.500M9 1.500h4L9 6.500h4M5.500 6h3l-3 3.500h3"/></svg></button>
  </div>
  <div class="watermark">
    <svg width="50" height="46" viewBox="0 0 50 46"><path d="M22 0 50 7V20L31 45Q30 46 28 45.500L5 39Q0 37 0 31 0 27 3 24Z" fill="#7e8386"/><path d="M22 9.500 36 13" stroke="#eef3f9" stroke-width="4" stroke-linecap="round"/><path d="M5 28q-3 4 1 7l22 6L47 16v-3L31 34q-1.500 1.500-4 1Z" fill="#f0f5fa"/></svg>
    <span>The Collection Book</span>
  </div>
</div>
</body>
</html>
```
FILE: styles.css
```css
* { box-sizing: border-box; }
html, body { height: 100%; }
body {
  margin: 0;
  display: flex;
  flex-direction: column;
  font: 12px/16px "Open Sans", "Noto Sans", sans-serif;
  color: #000;
  background: #fff;
}
a { color: inherit; text-decoration: none; }
svg { display: block; flex: none; }
.defs { position: absolute; width: 0; height: 0; }
.dvd-text { font: 600 8px "Open Sans", sans-serif; fill: #fff; }

button { border: 0; background: none; padding: 0; font: inherit; color: inherit; }
.bare { display: grid; place-items: center; flex: none; }

.i16 { width: 16px; height: 16px; }
.i16x12 { width: 16px; height: 12px; }
.i48 { width: 48px; height: 48px; }
.chev { width: 10px; height: 10px; color: #888; }

.window { flex: 1; min-height: 0; display: flex; flex-direction: column; }

/* title bar */
.titlebar {
  display: flex;
  height: 32px;
  padding: 1px 2px 0 8px;
  background: #cbdeea;
  box-shadow: inset 0 -1px #b7ccdb;
}
.tab {
  display: flex;
  align-items: center;
  width: 239px;
  padding: 0 15px 0 9px;
  gap: 10px;
  border-radius: 8px 8px 0 0;
  background: #edf4fa;
}
.tab-name { flex: 1; }
.new-tab { width: 50px; }
.captions { margin-left: auto; display: flex; height: 26px; }
.captions .bare { width: 46px; }

/* command bar */
.toolbar {
  display: flex;
  align-items: center;
  height: 55px;
  padding: 0 24px 0 20px;
  background: #edf4fa;
  border-bottom: 1px solid #bcc8d2;
}
.tool { display: flex; align-items: center; justify-content: center; gap: 8px; height: 32px; }
.tool span { padding-top: 2px; margin-right: -4px; }
.vsep { width: 1px; height: 32px; background: #dbe3ea; }
.new { margin-right: 16px; }
.tools { display: flex; padding: 0 2px; }
.tools .tool { width: 48px; }
.sort { margin: 0 26px 0 16px; }
.view { margin-right: 14px; }
.more { width: 48px; }
.account { margin-left: auto; gap: 12px; }

/* address row */
.navbar { display: flex; padding: 10px 12px 11px 4px; }
.history { display: flex; align-items: center; width: 133px; }
.history .bare { width: 34px; height: 34px; }
.history .forward { width: 36px; }
.history .recent { width: 24px; color: #444; }
.address { flex: 1; display: flex; height: 34px; border: 1px solid #d4d4d4; color: #777; }
.address .bare { width: 34px; }
.crumb { flex: 1; display: flex; align-items: center; gap: 4px; padding-left: 8px; color: #000; }
.search {
  display: flex;
  align-items: center;
  width: 202px;
  height: 34px;
  margin-left: 12px;
  padding: 0 14px 0 8px;
  border: 1px solid #d4d4d4;
}
.search input { flex: 1; min-width: 0; border: 0; padding: 0; outline: 0; font: inherit; background: none; }
.search input::placeholder { color: #6d6d6d; opacity: 1; }

/* folder tree and files */
.body { flex: 1; min-height: 0; display: flex; }
.sidebar { width: 159px; padding: 0 2px; border-right: 1px solid #f0f0f0; }
.row { display: flex; align-items: center; height: 32px; padding-right: 2px; border-radius: 2px; }
.current { background: #d9d9d9; }
.exp { width: 32px; padding-left: 9px; color: #777; }
.label { flex: 1; min-width: 0; margin-left: 5px; white-space: nowrap; }
.pin { width: 12px; height: 12px; }
.sidebar hr { height: 1px; border: 0; margin: 16px 8px 15px; background: #ccc; }

.files {
  flex: 1;
  display: grid;
  grid-template-columns: repeat(auto-fill, 280px);
  grid-auto-rows: 56px;
  gap: 4px;
  align-content: start;
  padding: 6px 0 0 15px;
}
.file { display: flex; align-items: center; border: 1px solid transparent; border-radius: 2px; }
.selected { background: #cce8ff; border-color: #99d1ff; }
.state { width: 37px; padding-left: 2px; }
.meta { min-height: 34px; margin-left: 5px; white-space: nowrap; }
.meta small { display: block; font-size: 12px; color: #6d6d6d; }

/* status bar */
.status { display: flex; align-items: center; height: 24px; padding: 0 9px 0 14px; color: #1e2a56; border-bottom: 1px solid #b0bac6; }
.count { padding-right: 8px; margin-right: 8px; border-right: 1px solid #eee; }
.modes { margin-left: auto; display: flex; gap: 10px; }

/* taskbar */
.taskbar {
  position: relative;
  display: grid;
  grid-template-columns: 1fr auto 1fr;
  align-items: center;
  height: 47px;
  background: linear-gradient(90deg, #e3eef7, #e0ebf9 20%, #d3def9 32%, #d8e3fa 45%, #d6e0f8 60%, #e0e9f8 72%, #e3eefa);
}
.weather { display: flex; align-items: center; gap: 7px; padding-left: 19px; text-align: left; color: #555d66; justify-self: start; }
.weather-text, .clock { display: flex; flex-direction: column; }
.temp { color: #111; }
.apps { display: flex; }
.app { width: 44px; height: 38px; display: grid; place-items: center; }
.app svg { width: 24px; height: 24px; }
.open { width: 38px; margin: 0 3px; border-radius: 4px; background: linear-gradient(#1573cc, #1573cc) center bottom / 16px 3px no-repeat #f0f4fc; }
.tray { display: flex; align-items: center; justify-self: end; padding-right: 21px; gap: 6px; color: #111; }
.overflow { margin-right: 11px; }
.clock { width: 65px; text-align: right; }
.watermark {
  position: absolute;
  right: 22px;
  top: 0;
  display: flex;
  align-items: center;
  gap: 15px;
  color: #6b7075;
  font-size: 18px;
  pointer-events: none;
}
.watermark span { opacity: .7; }
```
